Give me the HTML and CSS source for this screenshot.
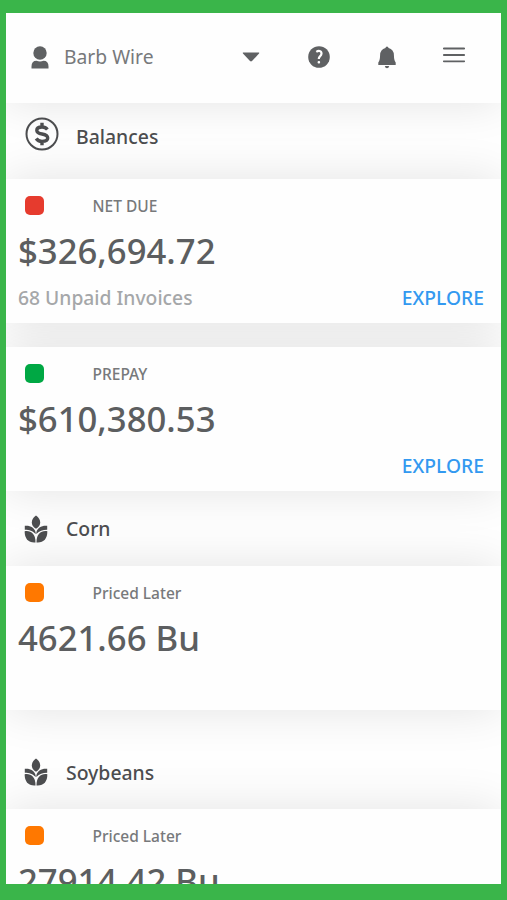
FILE: index.html
```html
<!DOCTYPE html>
<html lang="en">
<head>
    <meta charset="UTF-8">
    <meta name="viewport" content="width=device-width, initial-scale=1.0">
    <title>Balances</title>
    <link rel="stylesheet" href="styles.css">
</head>
<body>
    <svg class="defs" width="0" height="0">
        <symbol id="icon-crop" viewBox="0 0 24 28">
            <path d="M12 .5C14.800 2.500 16.200 5 16.200 7.400C16.200 10 14.800 12.200 12 13.800C9.200 12.200 7.800 10 7.800 7.400C7.800 5 9.200 2.500 12 .5Z"/>
            <path d="M.8 10.800C6 10.300 10.800 12.300 11.700 17.800V19C8.500 15.800 5.500 14.800 .8 14.700Z"/>
            <path d="M23.200 10.800C18 10.300 13.200 12.300 12.300 17.800V19C15.500 15.800 18.500 14.800 23.200 14.700Z"/>
            <path d="M.7 16.300C6.500 15.300 11.600 18.500 11.500 27.500C4.500 28.200 .4 23.500 .7 16.300Z"/>
            <path d="M23.300 16.300C17.500 15.300 12.400 18.500 12.500 27.500C19.500 28.200 23.600 23.500 23.300 16.300Z"/>
        </symbol>
    </svg>
    <div class="screen">
        <header class="topbar">
            <svg class="icon-user" viewBox="0 0 18 23">
                <circle cx="9" cy="7" r="6.700"/>
                <path d="M.5 22.500V20.500Q.5 14.800 5.500 14.800Q9 16 12.500 14.800Q17.500 14.800 17.500 20.500V22.500Z"/>
            </svg>
            <span class="user-name">Barb Wire</span>
            <svg class="icon-caret" viewBox="0 0 18 10"><path d="M1 .5H17Q17.500 1 17 1.600L10 9Q9 9.800 8 9L1 1.600Q.5 1 1 .5Z"/></svg>
            <svg class="icon-help" viewBox="0 0 22 22">
                <circle cx="11" cy="11" r="10.800"/>
                <path class="mark" d="M8.300 5.800Q10 4.700 11.600 5Q13.600 5.500 13.500 7.700Q13.400 9.100 12 10.300Q10.800 11.300 10.800 13"/>
                <rect class="dot" x="9.600" y="15" width="2.500" height="2.600" rx="1"/>
            </svg>
            <svg class="icon-bell" viewBox="0 0 18 23">
                <path d="M9 .5Q10.200 .7 10.600 2Q15.700 3.500 15.900 9Q16 14.500 17.700 16.500V19H.3V16.500Q2 14.500 2.100 9Q2.300 3.500 7.400 2Q7.800 .7 9 .5Z"/>
                <path d="M6.800 20H11.200Q10.800 22.300 9 22.300Q7.200 22.300 6.800 20Z"/>
            </svg>
            <svg class="icon-menu" viewBox="0 0 22 16"><path d="M.8 1.500H21.200M.8 8H21.200M.8 14.300H21.200"/></svg>
        </header>

        <section>
            <h2 class="heading balances">
                <svg class="icon-dollar" viewBox="0 0 34 34">
                    <circle cx="17" cy="17" r="15.500"/>
                    <path d="M22.400 12.500Q20.500 10 17 10Q11.800 10 11.800 13.300Q11.800 16.200 17 17Q22.700 18 22.700 21Q22.700 24.400 17 24.400Q13 24.400 11.200 21.500M17 5.800V10M17 24V28.300"/>
                </svg>
                <span>Balances</span>
            </h2>
            <div class="card">
                <div class="card-label"><i class="swatch red"></i>NET DUE</div>
                <div class="amount">$326,694.72</div>
                <div class="card-footer">
                    <span class="note">68 Unpaid Invoices</span>
                    <a class="explore">EXPLORE</a>
                </div>
            </div>
            <div class="card">
                <div class="card-label"><i class="swatch green"></i>PREPAY</div>
                <div class="amount">$610,380.53</div>
                <div class="card-footer">
                    <a class="explore">EXPLORE</a>
                </div>
            </div>
        </section>

        <section>
            <h2 class="heading">
                <svg class="icon-crop"><use href="#icon-crop"/></svg>
                <span>Corn</span>
            </h2>
            <div class="card">
                <div class="card-label"><i class="swatch orange"></i>Priced Later</div>
                <div class="amount">4621.66 Bu</div>
            </div>
        </section>

        <section>
            <h2 class="heading soybeans">
                <svg class="icon-crop"><use href="#icon-crop"/></svg>
                <span>Soybeans</span>
            </h2>
            <div class="card">
                <div class="card-label"><i class="swatch orange"></i>Priced Later</div>
                <div class="amount">27914.42 Bu</div>
            </div>
        </section>
    </div>
</body>
</html>
```
FILE: styles.css
```css
* {
    box-sizing: border-box;
}

body {
    margin: 0;
    height: 900px;
    padding: 13px 6px 16px;
    overflow: hidden;
    background: #3ab54a;
    font-family: "Noto Sans", "Open Sans", sans-serif;
    font-weight: 500;
}

.defs {
    position: absolute;
}

.screen {
    height: 871px;
    overflow: hidden;
    isolation: isolate;
    background: #fefefe;
}

svg {
    display: block;
    flex: none;
    fill: #5f6163;
}

/* shadows sit below every card so they only show in the gaps */
.topbar,
.card {
    position: relative;
    background: #fefefe;
}

.topbar::before,
.card::before {
    content: "";
    position: absolute;
    inset: 0;
    z-index: -1;
    box-shadow: 0 0 44px rgba(0, 0, 0, 0.11);
}

.topbar {
    display: flex;
    align-items: center;
    height: 90px;
    padding: 0 36px 2px 25px;
}

.icon-user {
    width: 18px;
    height: 23px;
}

.user-name {
    width: 178px;
    margin: 0 0 1px 15px;
    font-size: 19.3px;
    font-weight: 400;
    color: #77797b;
}

.icon-caret {
    width: 18px;
    height: 10px;
}

.icon-help {
    width: 22px;
    height: 22px;
    margin-left: 48px;
}

.icon-help .mark {
    fill: none;
    stroke: #fff;
    stroke-width: 2.2;
}

.icon-help .dot {
    fill: #fff;
}

.icon-bell {
    width: 18px;
    height: 23px;
    margin-left: 48px;
}

.icon-menu {
    width: 22px;
    height: 16px;
    margin: 0 0 4px 47px;
    fill: none;
    stroke: #5f6163;
    stroke-width: 1.8;
    stroke-linecap: round;
}

.heading {
    display: flex;
    align-items: center;
    gap: 18px;
    height: 75px;
    margin: 0;
    padding: 0 18px;
    font-size: 19.4px;
    font-weight: 500;
    color: #4c4d4f;
}

.heading.balances {
    gap: 17px;
    height: 76px;
    padding: 0 19px 10px;
}

.heading.soybeans {
    height: 99px;
    padding-top: 25px;
}

.icon-dollar {
    width: 34px;
    height: 34px;
    margin-bottom: 4px;
    fill: none;
    stroke: #4c4d4f;
}

.icon-dollar circle {
    stroke-width: 2;
}

.icon-dollar path {
    stroke-width: 3.4;
}

.icon-crop {
    width: 24px;
    height: 28px;
    fill: #4c4d4f;
}

.card {
    height: 144px;
    padding: 13px 17px 0 12px;
}

.card + .card {
    margin-top: 24px;
}

.card-label {
    display: flex;
    align-items: center;
    height: 27px;
    font-size: 15.5px;
    color: #77797b;
}

.swatch {
    width: 19px;
    height: 19px;
    margin: 0 48.5px 0 7px;
    border-radius: 5px;
}

.red {
    background: #e63b2e;
}

.green {
    background: #00a844;
}

.orange {
    background: #ff7800;
}

.amount {
    height: 61px;
    line-height: 64px;
    font-size: 34.7px;
    color: #5c5e60;
}

.card-footer {
    display: flex;
    height: 36px;
    line-height: 36px;
    font-size: 19.3px;
}

.note {
    color: #a5a7a9;
}

.explore {
    margin-left: auto;
    color: #3399f0;
}
```
